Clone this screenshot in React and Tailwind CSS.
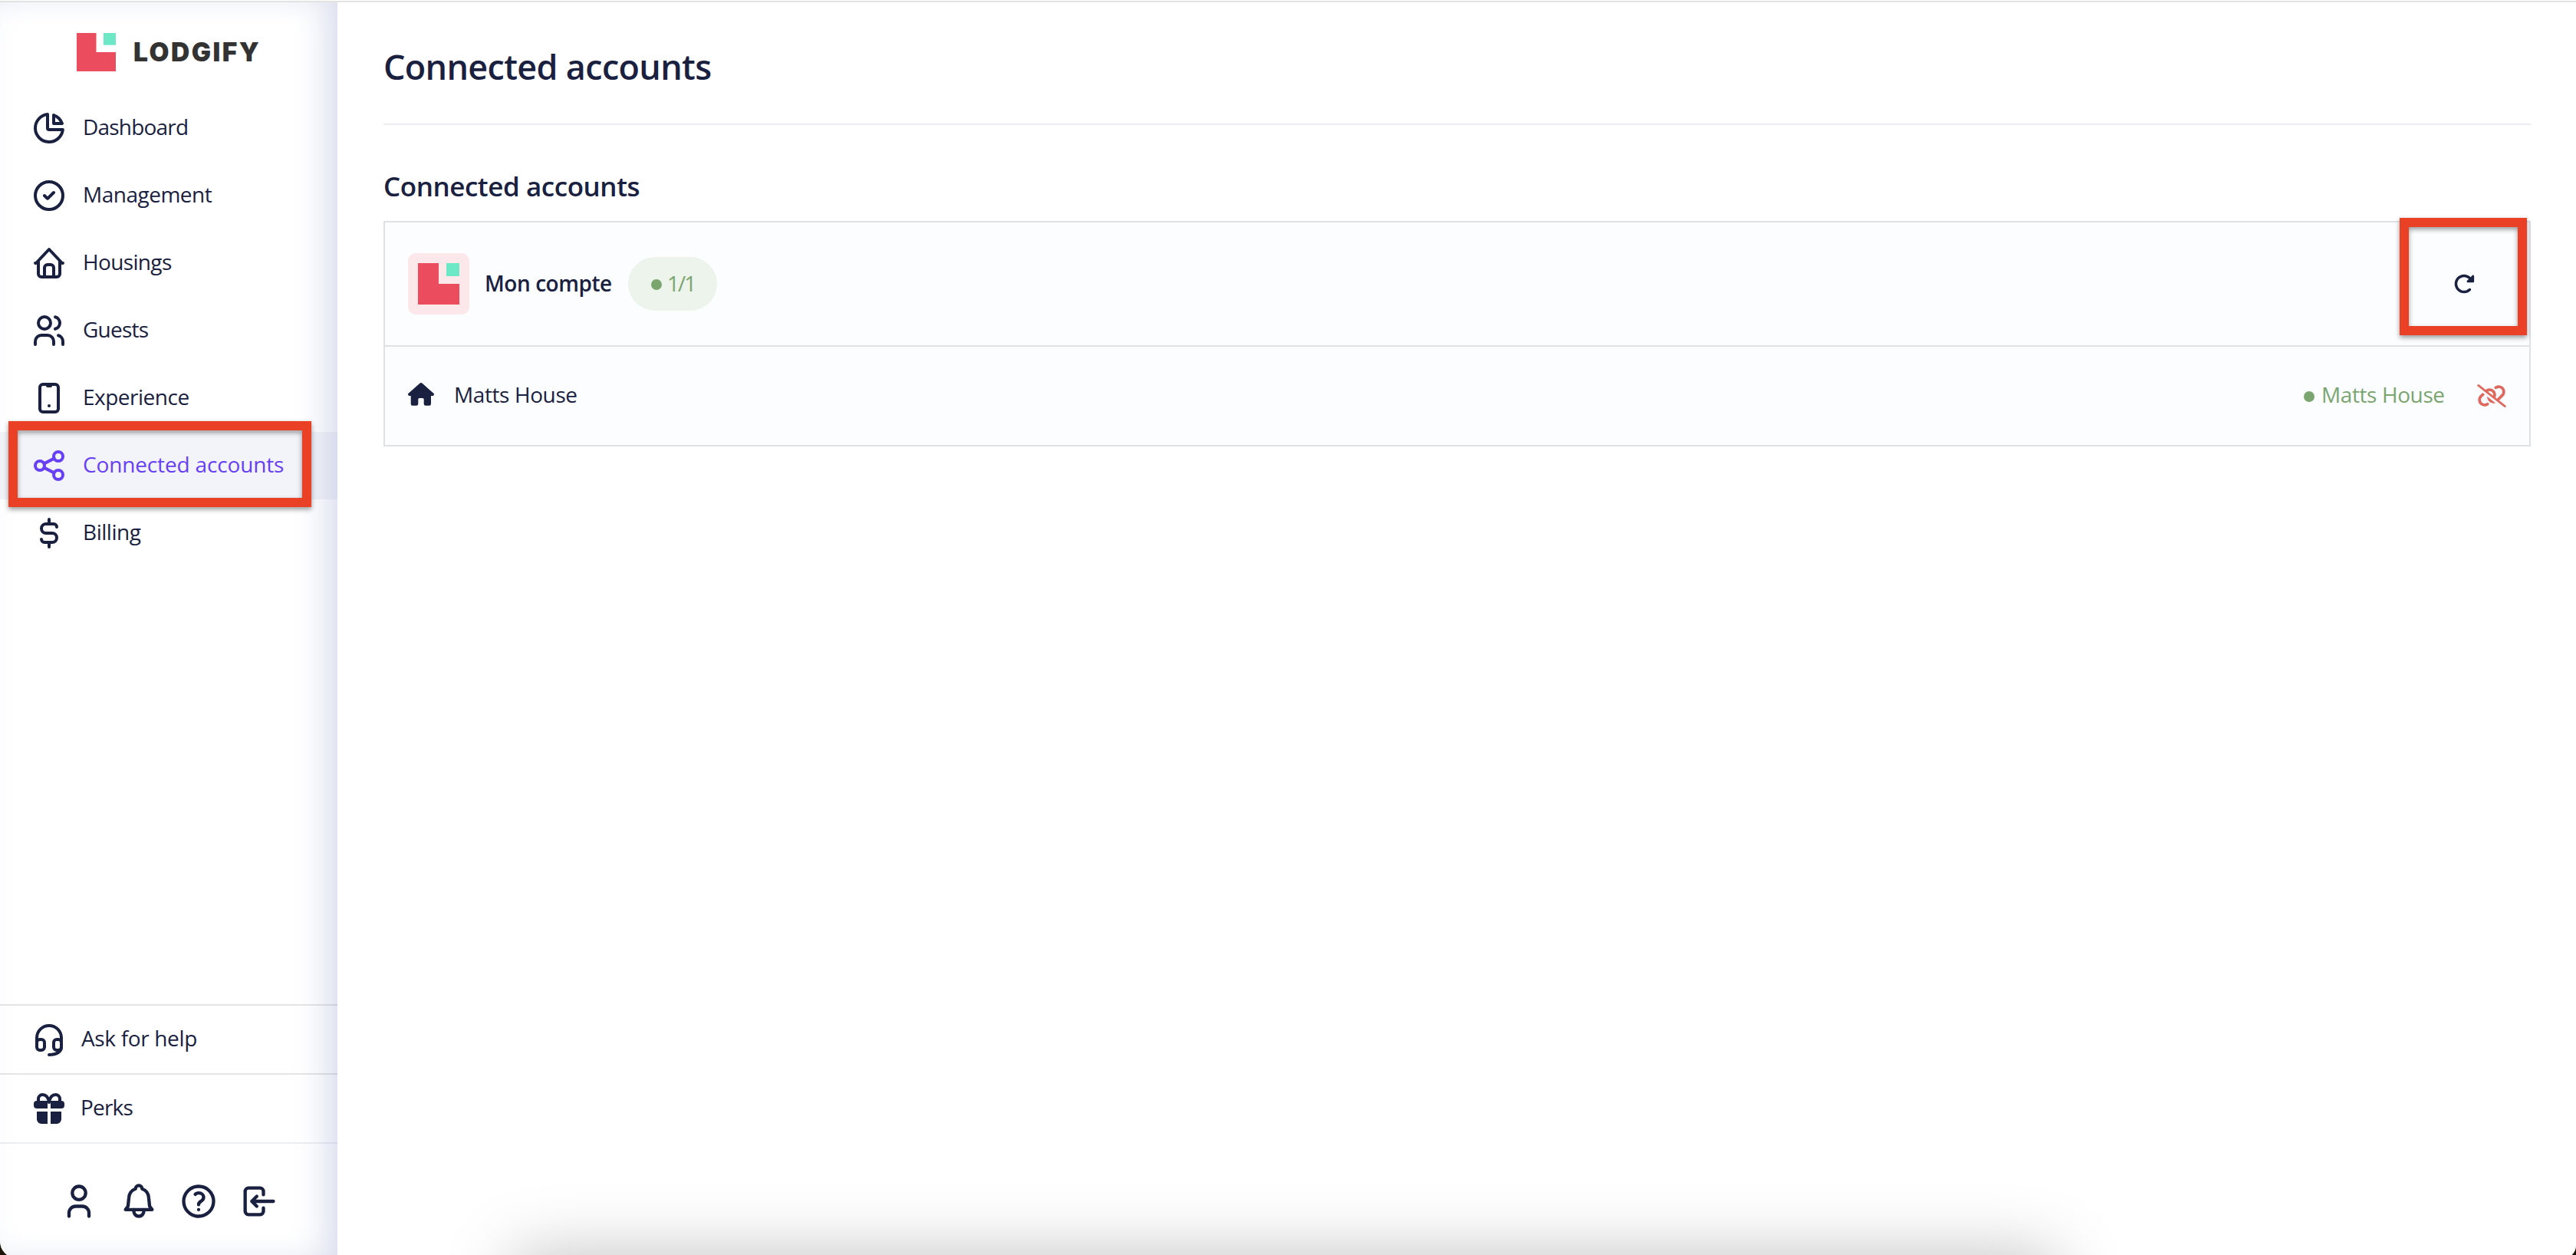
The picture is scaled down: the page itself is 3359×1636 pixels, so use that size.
import { FaLinkSlash, FaRotateRight } from "react-icons/fa6";

function Icon({ size, children }) {
  return (
    <svg
      className={size === "lg" ? "w-[52px] h-[52px] shrink-0" : "w-12 h-12 shrink-0"}
      viewBox="0 0 24 24"
      fill="none"
      stroke="currentColor"
      strokeWidth="2"
      strokeLinecap="round"
      strokeLinejoin="round"
    >
      {children}
    </svg>
  );
}

const menu = [
  {
    label: "Dashboard",
    tracking: "tracking-[-0.8px]",
    icon: (
      <>
        <path d="M11 3.055A9.001 9.001 0 1 0 20.945 13H12a1 1 0 0 1-1-1z" />
        <path d="M20.488 9H15V3.512A9.025 9.025 0 0 1 20.488 9z" />
      </>
    ),
  },
  {
    label: "Management",
    tracking: "tracking-[-0.5px]",
    icon: (
      <>
        <circle cx="12" cy="12" r="9" />
        <path d="M9 12l1.7 1.7a.4.4 0 0 0 .6 0L15 10" />
      </>
    ),
  },
  {
    label: "Housings",
    tracking: "tracking-[-0.65px]",
    icon: (
      <>
        <path d="M5 11v8a2 2 0 0 0 2 2h10a2 2 0 0 0 2-2v-8" />
        <path d="M3 12h.5L12 3l8.5 9h.5" />
        <path d="M9 21v-6a2 2 0 0 1 2-2h2a2 2 0 0 1 2 2v6" />
      </>
    ),
  },
  {
    label: "Guests",
    tracking: "tracking-[-0.75px]",
    icon: (
      <>
        <circle cx="9" cy="7" r="4" />
        <path d="M3 21v-2a4 4 0 0 1 4-4h4a4 4 0 0 1 4 4v2" />
        <path d="M16 3.13a4 4 0 0 1 0 7.75M21 21v-2a4 4 0 0 0-3-3.85" />
      </>
    ),
  },
  {
    label: "Experience",
    tracking: "tracking-[-0.5px]",
    icon: (
      <>
        <rect x="6" y="3" width="12" height="18" rx="2" />
        <path d="M11 4h2" />
        <circle cx="12" cy="17" r="1" fill="currentColor" stroke="none" />
      </>
    ),
  },
  {
    label: "Connected accounts",
    tracking: "tracking-[-0.15px]",
    active: true,
    icon: (
      <>
        <circle cx="6" cy="12" r="3" />
        <circle cx="18" cy="6" r="3" />
        <circle cx="18" cy="18" r="3" />
        <path d="M8.7 10.7l6.6-3.4M8.7 13.3l6.6 3.4" />
      </>
    ),
  },
  {
    label: "Billing",
    tracking: "tracking-[-0.45px]",
    icon: (
      <>
        <path d="M17 8a2 2 0 0 0-2-2h-5a3 3 0 0 0 0 6h4a3 3 0 0 1 0 6H9a2 2 0 0 1-2-2" />
        <path d="M12 3v3M12 18v3" />
      </>
    ),
  },
];

function LodgifyMark({ className }) {
  return (
    <svg className={className} viewBox="0 0 54 54" preserveAspectRatio="none">
      <path d="M0 0h27v27h27v27H0z" fill="#ec4d5e" />
      <path d="M37 0h17v17H37z" fill="#6de8c6" />
    </svg>
  );
}

function Sidebar() {
  return (
    <aside className="w-[440px] h-full shrink-0 flex flex-col shadow-[inset_-30px_0_50px_-20px_#d5daea,inset_0_0_40px_#f9fafd]">
      <div className="h-[120px] pt-10 pl-[100px] flex items-start">
        <LodgifyMark className="w-[51px] h-[50px]" />
        <span className="ml-[23px] mt-[5px] text-[33.5px] leading-[40px] font-[Inter] font-black text-[#333333] tracking-[2.5px]">
          LODGIFY
        </span>
      </div>

      <nav className="flex flex-col">
        {menu.map((item) => (
          <a
            key={item.label}
            className={
              item.active
                ? "h-[88px] pl-10 flex items-center bg-[#6470b0]/8 text-[#6740f5]"
                : "h-[88px] pl-10 flex items-center"
            }
          >
            <Icon>{item.icon}</Icon>
            <span className={`ml-5 text-[28px] leading-[40px] pb-1 ${item.tracking}`}>{item.label}</span>
          </a>
        ))}
      </nav>

      <div className="mt-auto">
        <a className="h-[90px] pl-10 flex items-center border-t-2 border-black/10">
          <Icon>
            <path d="M4 15v-4a8 8 0 0 1 16 0v6c0 3-3 5-8 5" />
            <rect x="4" y="12" width="5" height="7" rx="2" />
            <rect x="15" y="12" width="5" height="7" rx="2" />
          </Icon>
          <span className="ml-[18px] text-[28px] leading-[40px] pb-1 tracking-[-0.35px]">Ask for help</span>
        </a>
        <a className="h-[90px] pl-10 flex items-center border-t-2 border-black/10">
          <Icon>
            <path d="M12 8c-.5-3-2-5-4.300-5A2.700 2.700 0 0 0 5 5.700V8M12 8c.5-3 2-5 4.300-5A2.700 2.700 0 0 1 19 5.700V8" />
            <g fill="currentColor" stroke="none">
              <path d="M4 7h7v5H4a2 2 0 0 1-2-2V9a2 2 0 0 1 2-2zM13 7h7a2 2 0 0 1 2 2v1a2 2 0 0 1-2 2h-7z" />
              <path d="M4 14h7v8H7a3 3 0 0 1-3-3zM13 14h7v5a3 3 0 0 1-3 3h-4z" />
            </g>
          </Icon>
          <span className="ml-[17px] text-[28px] leading-[40px] pb-1 tracking-[-0.8px]">Perks</span>
        </a>
        <div className="h-[147px] pt-[5px] flex items-center justify-center gap-[26px] border-t-2 border-[#6470b0]/12">
          <Icon size="lg">
            <circle cx="12" cy="7" r="4" />
            <path d="M6 21v-2a4 4 0 0 1 4-4h4a4 4 0 0 1 4 4v2" />
          </Icon>
          <Icon size="lg">
            <path d="M4 17h16l-1.500-2-.5-5a6 6 0 0 0-4-5.500 2 2 0 0 0-4 0A6 6 0 0 0 6 10l-.5 5z" />
            <path d="M9 17v1a3 3 0 0 0 6 0v-1" />
          </Icon>
          <Icon size="lg">
            <circle cx="12" cy="12" r="9" />
            <path d="M10 7.800C10.400 7.300 11.200 7 12 7c1.800 0 3 1.100 3 2.600 0 1.200-.8 1.900-1.600 2.400-.9.500-1.400 1.100-1.400 2" />
            <circle cx="12" cy="17" r="1" fill="currentColor" stroke="none" />
          </Icon>
          <Icon size="lg">
            <path d="M15 8V6a2 2 0 0 0-2-2H6a2 2 0 0 0-2 2v12a2 2 0 0 0 2 2h7a2 2 0 0 0 2-2v-2" />
            <path d="M21 12H8M11 9l-3 3 3 3" />
          </Icon>
        </div>
      </div>
    </aside>
  );
}

function AccountCard() {
  return (
    <div className="mt-5 border-2 border-[#e0e1e6] bg-[#fcfdff]">
      <div className="h-[160px] px-[30px] flex items-center border-b-2 border-[#e0e1e6] box-content">
        <div className="w-20 h-20 rounded-[10px] bg-[#fce7ea] flex items-center justify-center">
          <LodgifyMark className="w-[54px] h-[54px]" />
        </div>
        <span className="ml-5 w-[168px] text-[28px] leading-[40px] pb-[3px] font-semibold whitespace-nowrap tracking-[-0.45px]">
          Mon compte
        </span>
        <div className="ml-[19px] w-[116px] h-[70px] rounded-full bg-[#ecf4ec] text-[#7aa56f] flex items-center pl-[30px]">
          <span className="w-3.5 h-3.5 mt-0.5 rounded-full bg-[#7aa56f]" />
          <span className="ml-[7px] text-[28px] leading-[40px] pb-[3px] tracking-[-2px]">1/1</span>
        </div>
        <FaRotateRight className="ml-auto mr-[41px] w-7 h-7" />
      </div>
      <div className="h-[128px] px-[30px] flex items-center">
        <svg className="w-[34px] h-[30px] mb-1" viewBox="0 0 34 30" fill="currentColor">
          <path d="M15.600.6a2.100 2.100 0 0 1 2.800 0l15 13.200c1.200 1.200.5 3-1.100 3.100H30v10.600a2.300 2.300 0 0 1-2.300 2.300h-4.700a2.300 2.300 0 0 1-2.300-2.300v-6a1.500 1.500 0 0 0-1.500-1.500h-4.400a1.500 1.500 0 0 0-1.500 1.500v6a2.300 2.300 0 0 1-2.300 2.300H6a2.300 2.300 0 0 1-2.300-2.300V16.900h-2C.1 16.800-.6 15 .6 13.800z" />
        </svg>
        <span className="ml-[26px] text-[28px] leading-[40px] pb-1 tracking-[-0.4px]">Matts House</span>
        <div className="ml-auto flex items-center text-[#7aa56f]">
          <span className="w-3.5 h-3.5 mt-0.5 rounded-full bg-[#7aa56f]" />
          <span className="ml-[9px] w-[163px] text-[28px] leading-[40px] pb-1 whitespace-nowrap tracking-[-0.4px]">
            Matts House
          </span>
        </div>
        <FaLinkSlash className="ml-10 w-[38px] h-[30px] text-[#e0695f]" />
      </div>
    </div>
  );
}

export default function App() {
  return (
    <div className="relative w-[3359px] h-[1636px] overflow-hidden bg-[#1c1408] text-[#1a2140] font-['Open_Sans','Noto_Sans',sans-serif]">
      <div className="h-[1640px] flex flex-col rounded-bl-[22px] rounded-br-[16px] overflow-hidden bg-white">
        <div className="h-[3px] shrink-0 border-b-2 border-[#e1e3e1]" />
        <div className="h-[1633px] shrink-0 flex">
          <Sidebar />
          <main className="flex-1 pl-[60px] pr-[59px]">
            <div className="h-[160px] pt-[54px] border-b-2 border-[#ebecf2]">
              <h1 className="text-[45px] leading-[60px] font-semibold tracking-[-0.7px]">Connected accounts</h1>
            </div>
            <h2 className="mt-[55px] text-[35px] leading-[50px] font-semibold tracking-[-0.45px]">Connected accounts</h2>
            <AccountCard />
          </main>
        </div>
      </div>

      {/* dock shadow */}
      <div className="absolute left-[670px] top-[1638px] w-[2010px] h-[200px] shadow-[0_0_90px_rgba(0,0,0,0.26)]" />

      {/* highlights */}
      <div className="absolute left-[11px] top-[549px] w-[395px] h-[112px] border-[12px] border-[#ea4025] drop-shadow-[0_3px_3px_rgba(0,0,0,0.4)]" />
      <div className="absolute left-[3129px] top-[284px] w-[166px] h-[153px] border-[12px] border-[#ea4025] drop-shadow-[0_3px_3px_rgba(0,0,0,0.4)]" />
    </div>
  );
}
